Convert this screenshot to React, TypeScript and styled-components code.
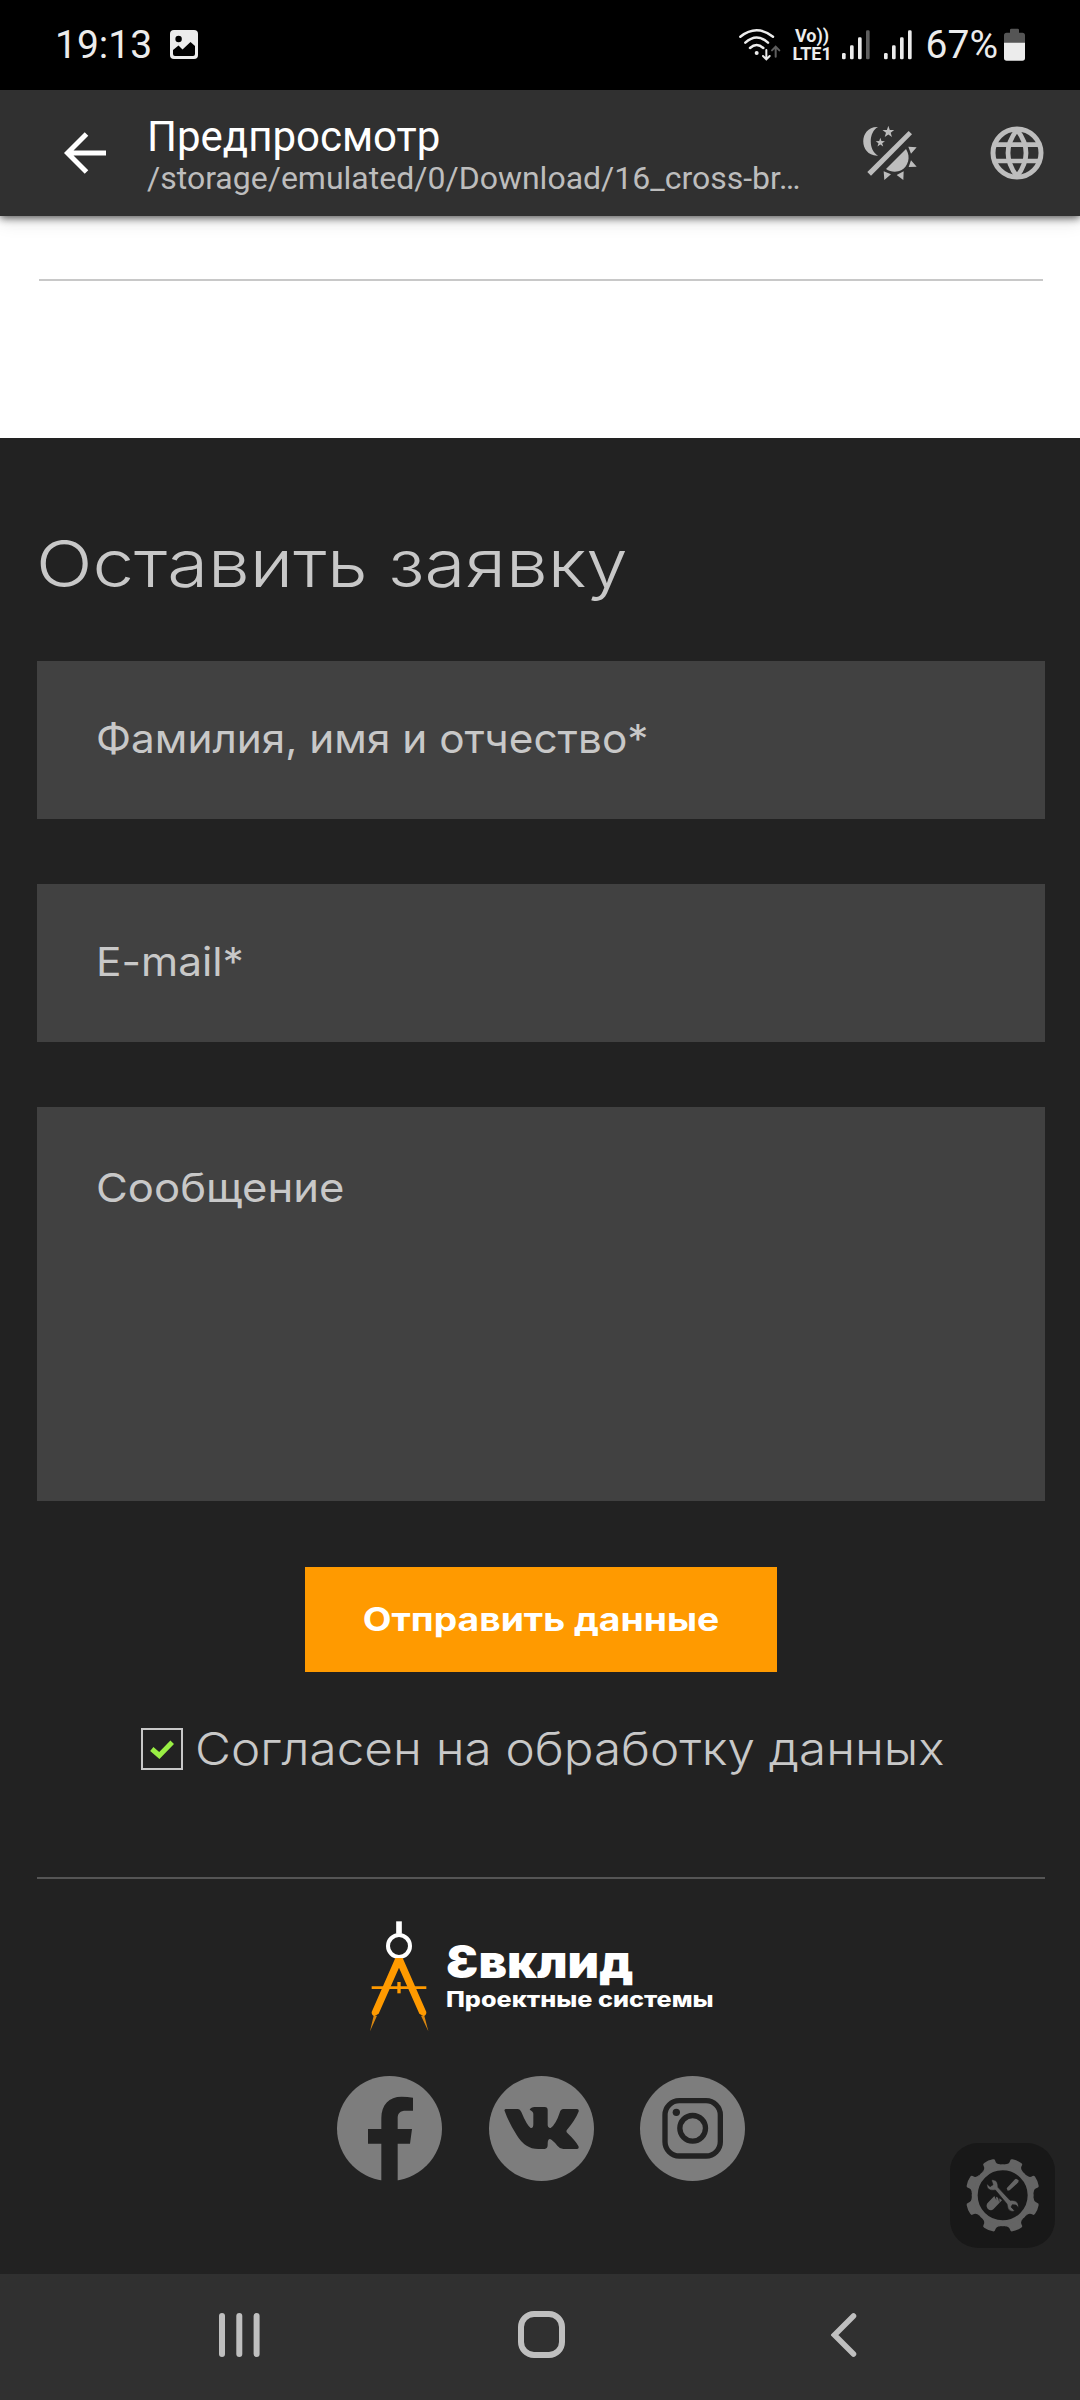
import React from "react";
import styled, { createGlobalStyle } from "styled-components";

const GlobalStyle = createGlobalStyle`
  *, *::before, *::after { box-sizing: border-box; }
  body { margin: 0; background: #222222; }
`;

const Screen = styled.div`
  position: relative;
  display: flex;
  flex-direction: column;
  width: 1080px;
  height: 2400px;
  overflow: hidden;
  background: #222222;
  font-family: Inter, "Noto Sans", sans-serif;
`;

const StatusBar = styled.header`
  display: flex;
  align-items: center;
  justify-content: space-between;
  flex: none;
  height: 90px;
  padding: 0 55px 1px;
  background: #000;
  color: #ececec;
  font: 400 39px/44px Roboto, sans-serif;
`;

const StatusGroup = styled.div<{ $gap: number }>`
  display: flex;
  align-items: center;
  gap: ${(p) => p.$gap}px;
`;

const Network = styled.div`
  display: flex;
  flex-direction: column;
  align-items: center;
  width: 39px;
  margin: 1px 2px 0 4px;
  font: 700 18px/18px Roboto, sans-serif;
`;

const AppBar = styled.div`
  position: relative;
  z-index: 1;
  display: flex;
  align-items: center;
  flex: none;
  height: 126px;
  padding: 0 36px 0 64px;
  background: #303030;
  box-shadow: 0 2px 8px rgba(0, 0, 0, 0.65), 0 8px 16px rgba(0, 0, 0, 0.08);
  font-family: Roboto, sans-serif;
`;

const Titles = styled.div`
  display: flex;
  flex-direction: column;
  width: 660px;
  margin: 8px 53px 0 41px;
`;

const Title = styled.h1`
  margin: 0;
  color: #fff;
  font-size: 42px;
  font-weight: 400;
  line-height: 42px;
`;

const Path = styled.div`
  color: #bdbdbd;
  font-size: 32px;
  line-height: 40px;
  white-space: nowrap;
`;

const Actions = styled.div`
  display: flex;
  align-items: center;
  gap: 73px;
  margin-left: auto;
`;

const WhitePanel = styled.section`
  flex: none;
  height: 222px;
  padding: 63px 37px 0 39px;
  background: #fff;
`;

const Rule = styled.hr<{ $color: string }>`
  height: 2px;
  margin: 0;
  border: 0;
  background: ${(p) => p.$color};
`;

const Contact = styled.main`
  display: flex;
  flex-direction: column;
  flex: 1;
  padding: 86px 35px 0 37px;
  color: #c8c8c8;
`;

/* Widens the letterforms without changing their height. */
const Stretch = styled.span<{ $x: number; $origin?: string }>`
  display: inline-block;
  white-space: nowrap;
  transform: scaleX(${(p) => p.$x});
  transform-origin: ${(p) => p.$origin ?? "left"} center;
`;

const Heading = styled.h2`
  margin: 0 0 57px -1px;
  font-size: 65px;
  font-weight: 300;
  line-height: 80px;
`;

const Field = styled.div<{ $height: number; $top?: number }>`
  flex: none;
  height: ${(p) => p.$height}px;
  margin-bottom: 65px;
  padding: ${(p) => p.$top ?? 53}px 59px 0;
  background: #414141;
  font-size: 40px;
  font-weight: 400;
  line-height: 50px;
`;

const Submit = styled.button`
  align-self: center;
  flex: none;
  width: 472px;
  height: 105px;
  margin: 1px 0 56px;
  padding: 0;
  border: 0;
  background: #ff9a00;
  color: #fff;
  font: 700 32px/40px Inter, sans-serif;
`;

const Consent = styled.label`
  display: flex;
  align-items: center;
  gap: 12px;
  height: 42px;
  padding-left: 104px;
  font-size: 45px;
  font-weight: 300;
  line-height: 42px;
`;

const CheckBox = styled.span`
  display: flex;
  align-items: center;
  justify-content: center;
  flex: none;
  width: 42px;
  height: 42px;
  border: 2px solid #c8c8c8;
`;

const Footer = styled.footer`
  display: flex;
  flex-direction: column;
  align-items: stretch;
  margin-top: 107px;
`;

const Brand = styled.div`
  display: flex;
  align-items: flex-start;
  gap: 16px;
  margin: 42px 0 0 332px;
  color: #fff;
`;

const BrandText = styled.div`
  display: flex;
  flex-direction: column;
  padding-top: 16px;
`;

const BrandName = styled.div`
  font-size: 45px;
  font-weight: 900;
  line-height: 50px;
`;

const BrandNote = styled.div`
  font-size: 21px;
  font-weight: 800;
  line-height: 26px;
`;

const Socials = styled.div`
  display: flex;
  gap: 46.5px;
  margin: 44px 0 0 300px;
`;

const Tools = styled.button`
  position: absolute;
  left: 950px;
  top: 2143px;
  width: 105px;
  height: 105px;
  padding: 0;
  border: 0;
  border-radius: 28px;
  background: #181818;
`;

const NavBar = styled.nav`
  display: grid;
  grid-template-columns: 299px 313px auto;
  align-items: center;
  flex: none;
  height: 126px;
  padding: 0 0 5px 219px;
  background: #303030;
`;

const Svg = styled.svg`
  display: block;
  flex: none;
`;

const Signal = ({ last }: { last: string }) => (
  <Svg width="28" height="30" viewBox="0 0 84 90" fill="#ececec">
    <rect x="0" y="69" width="11" height="19" rx="4" />
    <rect x="24" y="46" width="11" height="42" rx="4" />
    <rect x="48" y="22" width="11" height="66" rx="4" />
    <rect x="72" y="1" width="11" height="87" rx="4" fill={last} />
  </Svg>
);

const PictureIcon = () => (
  <Svg width="28" height="29" viewBox="0 0 28 29">
    <rect width="28" height="29" rx="4" fill="#ececec" />
    <circle cx="8.6" cy="9" r="3.2" fill="#000" />
    <path d="M3 20 8.5 15.5 12.5 19.5 20.5 12 25 16V24Q25 26 23 26H5Q3 26 3 24Z" fill="#000" />
  </Svg>
);

const WifiIcon = () => (
  <Svg width="42" height="33" viewBox="118 84 126 99" fill="none" stroke="#ececec" strokeWidth="7.5" strokeLinecap="round">
    <path d="M122 110Q171 72 220 110M137 128Q171 97 205 128M151 144Q171 126 191 144" />
    <circle cx="171" cy="159" r="6" fill="#ececec" stroke="none" />
    <path d="M200 150V177M190 168 200 178 210 168" strokeWidth="6" />
    <path d="M228 170V142M217 151 228 140 239 151" strokeWidth="6" stroke="#5e5e5e" />
  </Svg>
);

const BatteryIcon = () => (
  <Svg width="21" height="33" viewBox="912 84 63 99">
    <path d="M930 98V90Q930 86 934 86H953Q957 86 957 90V98H967Q975 98 975 106V129H912V106Q912 98 920 98Z" fill="#555" />
    <path d="M912 128H975V174Q975 182 967 182H920Q912 182 912 174Z" fill="#ececec" />
  </Svg>
);

const BackArrow = () => (
  <Svg width="42" height="42" viewBox="0 0 42 42" fill="none" stroke="#fff" strokeWidth="5">
    <path d="M42 21H4M22.5 2 3.5 21 22.5 40" />
  </Svg>
);

const star = (cx: number, cy: number, r: number) =>
  Array.from({ length: 10 }, (_, i) => {
    const a = -Math.PI / 2 + (i * Math.PI) / 5;
    const d = i % 2 ? r * 0.4 : r;
    return `${cx + d * Math.cos(a)},${cy + d * Math.sin(a)}`;
  }).join(" ");

const DayNightIcon = () => (
  <Svg width="54" height="54" viewBox="68 76 162 162" fill="#bdbdbd">
    <path d="M113 79C54 76 54 168 113 165C84 150 84 94 113 79Z" />
    <polygon points={star(144, 94, 18.5)} />
    <polygon points={star(120, 126, 14.5)} />
    <path d="M205 91 215 101 92 225 81 214Z" />
    <path d="M197 145C213 170 202 198 184 208C168 216 151 214 137 205Z" />
    <path d="M204 138 229 140 212 159ZM212 179 229 198 205 199ZM130 212 152 221 132 238ZM190 212 189 238 169 223Z" />
  </Svg>
);

const GlobeIcon = () => (
  <Svg width="54" height="54" viewBox="449 77 162 162" fill="none" stroke="#bdbdbd" strokeWidth="15">
    <circle cx="530" cy="158" r="72" />
    <path d="M464 133H596M464 182H596" strokeWidth="14" />
    <path d="M530 88Q476 158 530 228M530 88Q584 158 530 228" strokeWidth="14" />
  </Svg>
);

const Tick = () => (
  <Svg width="24" height="19" viewBox="0 0 24 19" fill="none" stroke="#99ee44" strokeWidth="5">
    <path d="M1.8 9 9.3 15.5 22.2 2.2" />
  </Svg>
);

const Compasses = () => (
  <Svg width="61" height="111" viewBox="88 182 183 333" fill="none">
    <path d="M178 183V220" stroke="#fff" strokeWidth="17" />
    <circle cx="178" cy="257" r="33" stroke="#fff" strokeWidth="12" />
    <path d="M167 293H189L260 455Q261 463 252 468L239 460 178 322 117 460 104 468Q95 463 96 455Z" fill="#ff9a00" />
    <path d="M96 382H260" stroke="#ff9a00" strokeWidth="8" />
    <path d="M173 365H183V399H173Z" fill="#ff9a00" />
    <path d="M102 466 91 513 112 466ZM254 466 266 513 244 466Z" fill="#d98710" />
  </Svg>
);

const Facebook = () => (
  <Svg width="105" height="105" viewBox="51 78 315 315">
    <circle cx="208.5" cy="235.5" r="157.5" fill="#7d7d7d" />
    <path d="M184 394V281H144V237H184V205C184 164 207 140 245 140Q262 140 279 143V182H258C240 182 233 190 233 205V237H276L270 281H233V394Z" fill="#222" />
  </Svg>
);

const Vk = () => (
  <Svg width="105" height="105" viewBox="507 78 315 315">
    <circle cx="664.5" cy="235.5" r="157.5" fill="#7d7d7d" />
    <path d="M557 177H594Q600 177 604 186Q620 225 632 234Q640 236 640 222V192Q640 184 629 179Q633 171 644 171H674Q683 171 683 180V226Q684 236 692 234Q708 222 719 188Q722 177 730 177H771Q779 178 775 187Q766 210 740 241Q738 245 742 249Q768 274 775 288Q779 297 769 297H730Q720 297 712 287Q698 270 690 267Q683 267 683 282Q684 297 674 297H655Q615 297 590 255Q565 215 554 183Q552 178 557 177Z" fill="#222" />
  </Svg>
);

const Instagram = () => (
  <Svg width="105" height="105" viewBox="960 78 315 315" fill="none" stroke="#222" strokeWidth="16">
    <circle cx="1117.5" cy="235.5" r="157.5" fill="#7d7d7d" stroke="none" />
    <rect x="1035" y="152" width="166" height="166" rx="43" />
    <circle cx="1118" cy="235" r="38.5" />
    <circle cx="1069" cy="187" r="11" fill="#222" stroke="none" />
  </Svg>
);

const GearIcon = () => (
  <Svg width="105" height="105" viewBox="90 98 315 315" fill="#646464">
    <circle cx="248" cy="255" r="84" fill="none" stroke="#646464" strokeWidth="18" />
    {Array.from({ length: 8 }, (_, i) => (
      <path
        key={i}
        transform={`rotate(${22.5 + i * 45} 248 255)`}
        d="M218 167Q231 162 229 150Q228 145 234 144Q248 141 262 144Q268 145 267 150Q265 162 278 167Z"
      />
    ))}
    <path d="M263 241 260 234 285 207Q288 203 291 207L296 210 295 216 269 240Z" />
    <path d="M223 257 229 270 228 259 234 262 238 277 238 264 246 270 220 297Q212 303 203 295Q197 288 202 279Z" />
    <path
      stroke="#181818"
      strokeWidth="2"
      d="M214 209 219 223 210 229 201 220Q199 235 211 239Q220 241 226 239L261 281Q262 297 271 302Q278 305 284 301L273 290 277 283 288 284 295 292Q297 277 286 272Q278 269 270 270L234 231Q234 214 225 210Q219 207 214 209Z"
    />
  </Svg>
);

const RecentsIcon = () => (
  <Svg width="41" height="44" viewBox="0 0 41 44" fill="#bfbfbf">
    <rect x="0" y="0" width="6" height="44" rx="3" />
    <rect x="17.3" y="0" width="6" height="44" rx="3" />
    <rect x="34.6" y="0" width="6" height="44" rx="3" />
  </Svg>
);

const HomeIcon = () => (
  <Svg width="47" height="47" viewBox="0 0 47 47" fill="none" stroke="#bfbfbf" strokeWidth="6">
    <rect x="3" y="3" width="41" height="41" rx="13" />
  </Svg>
);

const BackIcon = () => (
  <Svg width="26" height="44" viewBox="0 0 26 44" fill="none" stroke="#bfbfbf" strokeWidth="5.5" strokeLinecap="round">
    <path d="M22.5 3 3.5 22 22.5 41" />
  </Svg>
);

export default function App() {
  return (
    <Screen>
      <GlobalStyle />
      <StatusBar>
        <StatusGroup $gap={18}>
          <span>19:13</span>
          <PictureIcon />
        </StatusGroup>
        <StatusGroup $gap={8}>
          <WifiIcon />
          <Network>
            <span>Vo))</span>
            <span>LTE1</span>
          </Network>
          <StatusGroup $gap={14}>
            <Signal last="#5e5e5e" />
            <Signal last="#ececec" />
            <StatusGroup $gap={6}>
              <span>67%</span>
              <BatteryIcon />
            </StatusGroup>
          </StatusGroup>
        </StatusGroup>
      </StatusBar>
      <AppBar>
        <BackArrow />
        <Titles>
          <Title>Предпросмотр</Title>
          <Path>/storage/emulated/0/Download/16_cross-br…</Path>
        </Titles>
        <Actions>
          <DayNightIcon />
          <GlobeIcon />
        </Actions>
      </AppBar>
      <WhitePanel>
        <Rule $color="#c8c8c8" />
      </WhitePanel>
      <Contact>
        <Heading>
          <Stretch $x={1.145}>Оставить заявку</Stretch>
        </Heading>
        <Field $height={158}>
          <Stretch $x={1.058}>Фамилия, имя и отчество*</Stretch>
        </Field>
        <Field $height={158}>
          <Stretch $x={1.06}>E-mail*</Stretch>
        </Field>
        <Field $height={394} $top={56}>
          <Stretch $x={1.09}>Сообщение</Stretch>
        </Field>
        <Submit>
          <Stretch $x={1.165} $origin="center">Отправить данные</Stretch>
        </Submit>
        <Consent>
          <CheckBox>
            <Tick />
          </CheckBox>
          <Stretch $x={1.098}>Согласен на обработку данных</Stretch>
        </Consent>
        <Footer>
          <Rule $color="#555555" />
          <Brand>
            <Compasses />
            <BrandText>
              <BrandName>
                <Stretch $x={1.08}>Ɛвклид</Stretch>
              </BrandName>
              <BrandNote>
                <Stretch $x={1.2}>Проектные системы</Stretch>
              </BrandNote>
            </BrandText>
          </Brand>
          <Socials>
            <Facebook />
            <Vk />
            <Instagram />
          </Socials>
        </Footer>
      </Contact>
      <NavBar>
        <RecentsIcon />
        <HomeIcon />
        <BackIcon />
      </NavBar>
      <Tools aria-label="Инструменты">
        <GearIcon />
      </Tools>
    </Screen>
  );
}
